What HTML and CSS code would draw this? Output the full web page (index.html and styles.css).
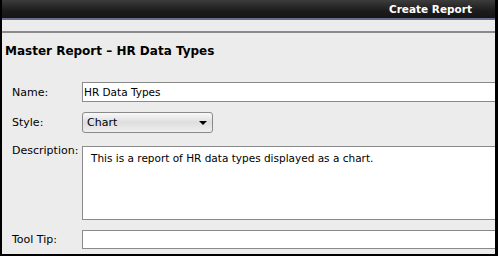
FILE: index.html
```html
<!DOCTYPE html>
<html lang="en">
<head>
    <meta charset="UTF-8">
    <title>Create Report</title>
    <link rel="stylesheet" href="styles.css">
</head>
<body>

    <div class="window">
        <!-- Заголовок окна -->
        <div class="titlebar">
            <span>Create Report</span>
        </div>

        <div class="separator"></div>

        <h1 class="report-title">Master Report – HR Data Types</h1>

        <!-- Форма -->
        <form class="report-form">
            <label class="row-name">Name:</label>
            <input class="row-name" type="text" value="HR Data Types">

            <label class="row-style">Style:</label>
            <div class="select row-style">
                <span>Chart</span>
                <span class="arrow"></span>
            </div>

            <label class="row-desc">Description:</label>
            <textarea class="row-desc">This is a report of HR data types displayed as a chart.</textarea>

            <label class="row-tip">Tool Tip:</label>
            <input class="row-tip" type="text" value="">
        </form>
    </div>

</body>
</html>
```

FILE: styles.css
```css
* {
    box-sizing: border-box;
    margin: 0;
    padding: 0;
}

body {
    font-family: 'DejaVu Sans', sans-serif;
    background-color: #000;
    width: 498px;
    height: 256px;
    overflow: hidden;
}

.window {
    height: 256px;
    background-color: #ececec;
    border-left: 2px solid #000;
    border-right: 3px solid #000;
    border-bottom: 2px solid #000;
    overflow: hidden;
}

/* Верхняя полоса */
.titlebar {
    height: 20px;
    background: linear-gradient(#3c3c3c, #1c1c1c 60%, #151515);
    border-bottom: 2px solid #6c6c8c;
    display: flex;
    justify-content: flex-end;
    align-items: center;
    padding-right: 23px;
}

.titlebar span {
    color: #fff;
    font-weight: bold;
    font-size: 10.5px;
}

.separator {
    margin-top: 11px;
    height: 2px;
    background-color: #8a8a8a;
}

.report-title {
    font-size: 12px;
    font-weight: bold;
    color: #000;
    padding: 11px 0 0 3px;
    height: 49px;
}

/* Поля формы */
.report-form {
    display: grid;
    grid-template-columns: 80px 1fr;
    row-gap: 10px;
}

.report-form label {
    font-size: 11px;
    color: #000;
    padding-left: 10px;
    align-self: center;
}

.report-form label.row-desc {
    align-self: start;
    margin-top: 1px;
}

.report-form input,
.report-form textarea {
    font-family: 'DejaVu Sans', sans-serif;
    font-size: 10.5px;
    color: #000;
    background: #fff;
    border: 1px solid #8a8a8a;
    border-right: none;
    outline: none;
    padding: 0 1px;
}

input.row-name {
    height: 20px;
}

input.row-tip {
    height: 19px;
}

textarea.row-desc {
    margin-top: 3px;
    height: 74px;
    padding: 5px 8px;
    resize: none;
}

.select {
    width: 131px;
    height: 21px;
    border: 1px solid #8a8a8a;
    border-radius: 3px;
    background: linear-gradient(#f8f8f8, #dedede 50%, #efefef);
    display: flex;
    justify-content: space-between;
    align-items: center;
    padding: 0 5px 0 4px;
    font-size: 11px;
}

.arrow {
    width: 0;
    height: 0;
    border-left: 4px solid transparent;
    border-right: 4px solid transparent;
    border-top: 4px solid #000;
}
```
